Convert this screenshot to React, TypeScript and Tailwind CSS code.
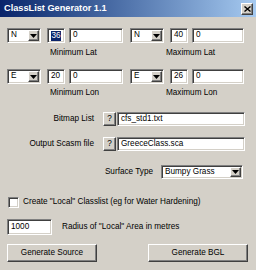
import React from "react";

const sunken =
  "border border-t-[#808080] border-l-[#808080] border-b-white border-r-white shadow-[inset_1px_1px_0_#404040,inset_-1px_-1px_0_#d4d0c8] bg-white";
const raised =
  "border border-t-white border-l-white border-b-[#404040] border-r-[#404040] shadow-[inset_-1px_-1px_0_#808080,inset_1px_1px_0_#d4d0c8] bg-[#d4d0c8]";

function Arrow() {
  return (
    <svg width="7" height="4" viewBox="0 0 7 4">
      <path d="M0 0h7L3.5 4z" fill="#000" />
    </svg>
  );
}

function Combo({ value, w, btn = 11 }: { value: string; w: number; btn?: number }) {
  return (
    <div className={`${sunken} flex items-stretch h-full p-[1px]`} style={{ width: w }}>
      <div className="flex-1 flex items-center pl-[2px] leading-none overflow-hidden whitespace-nowrap">{value}</div>
      <div className={`${raised} flex items-center justify-center`} style={{ width: btn }}>
        <Arrow />
      </div>
    </div>
  );
}

function Input({ w, children }: { w: number; children?: React.ReactNode }) {
  return (
    <div className={`${sunken} h-full flex items-center pl-[3px] leading-none whitespace-nowrap overflow-hidden`} style={{ width: w }}>
      {children}
    </div>
  );
}

export default function App() {
  return (
    <div className="w-[256px] h-[270px] bg-[#d4d0c8] overflow-hidden text-black text-[8.2px] [font-family:'Liberation_Sans',Arial,sans-serif]">
      {/* Title bar */}
      <div className="h-[17px] flex items-center justify-between pl-[4px] pr-[3px] bg-linear-to-r from-[#0a246a] to-[#a6caf0]">
        <span className="text-white font-bold text-[9.2px] leading-none">ClassList Generator 1.1</span>
        <div className={`${raised} w-[12px] h-[12px] flex items-center justify-center`}>
          <svg width="7" height="6" viewBox="0 0 7 6">
            <path d="M0.5 0.5L6.5 5.5M6.5 0.5L0.5 5.5" stroke="#000" strokeWidth="1.4" />
          </svg>
        </div>
      </div>

      {/* Row 1 */}
      <div className="mt-[11px] h-[15px] flex items-stretch pl-[7px]">
        <Combo value="N" w={34} />
        <div className="ml-[6px]">
          <Input w={18}>
            <span className="bg-[#0a246a] text-white px-[0.5px] leading-[10px]">36</span>
          </Input>
        </div>
        <div className="ml-[4px]">
          <Input w={54}>0</Input>
        </div>
        <div className="ml-[7px]">
          <Combo value="N" w={34} />
        </div>
        <div className="ml-[6px]">
          <Input w={18}>40</Input>
        </div>
        <div className="ml-[4px]">
          <Input w={52}>0</Input>
        </div>
      </div>
      <div className="mt-[5px] h-[10px] leading-[10px] flex">
        <span className="ml-[50px] w-[116px]">Minimum Lat</span>
        <span>Maximum Lat</span>
      </div>

      {/* Row 2 */}
      <div className="mt-[11px] h-[15px] flex items-stretch pl-[7px]">
        <Combo value="E" w={34} />
        <div className="ml-[6px]">
          <Input w={18}>20</Input>
        </div>
        <div className="ml-[4px]">
          <Input w={54}>0</Input>
        </div>
        <div className="ml-[7px]">
          <Combo value="E" w={34} />
        </div>
        <div className="ml-[6px]">
          <Input w={18}>26</Input>
        </div>
        <div className="ml-[4px]">
          <Input w={52}>0</Input>
        </div>
      </div>
      <div className="mt-[4px] h-[10px] leading-[10px] flex">
        <span className="ml-[50px] w-[116px]">Minimum Lon</span>
        <span>Maximum Lon</span>
      </div>

      {/* Bitmap List */}
      <div className="mt-[14px] h-[14px] flex items-stretch">
        <div className="w-[94px] text-right flex items-center justify-end leading-none">Bitmap List</div>
        <button className={`${raised} ml-[9px] w-[13px] h-full flex items-center justify-center leading-none p-0`}>?</button>
        <div className="ml-[1px]">
          <Input w={128}>cfs_std1.txt</Input>
        </div>
      </div>

      {/* Output Scasm file */}
      <div className="mt-[11px] h-[14px] flex items-stretch">
        <div className="w-[94px] text-right flex items-center justify-end leading-none">Output Scasm file</div>
        <button className={`${raised} ml-[9px] w-[13px] h-full flex items-center justify-center leading-none p-0`}>?</button>
        <div className="ml-[1px]">
          <Input w={128}>GreeceClass.sca</Input>
        </div>
      </div>

      {/* Surface Type */}
      <div className="mt-[14px] h-[14px] flex items-stretch">
        <div className="w-[153px] flex items-center justify-end leading-none">Surface Type</div>
        <div className="ml-[8px] h-full">
          <Combo value="Bumpy Grass" w={82} />
        </div>
      </div>

      {/* Checkbox */}
      <div className="mt-[18px] h-[11px] flex items-center pl-[8px]">
        <div className={`${sunken} w-[11px] h-[11px]`} />
        <span className="ml-[4px] leading-none">Create "Local" Classlist (eg for Water Hardening)</span>
      </div>

      {/* Radius */}
      <div className="mt-[11px] h-[16px] flex items-stretch pl-[7px]">
        <Input w={45}>1000</Input>
        <div className="ml-[10px] flex items-center leading-none">Radius of "Local" Area in metres</div>
      </div>

      {/* Buttons */}
      <div className="mt-[9px] h-[18px] flex items-stretch pl-[7px]">
        <button className={`${raised} w-[90px] h-full flex items-center justify-center leading-none p-0`}>Generate Source</button>
        <button className={`${raised} ml-[51px] w-[100px] h-full flex items-center justify-center leading-none p-0`}>Generate BGL</button>
      </div>
    </div>
  );
}
